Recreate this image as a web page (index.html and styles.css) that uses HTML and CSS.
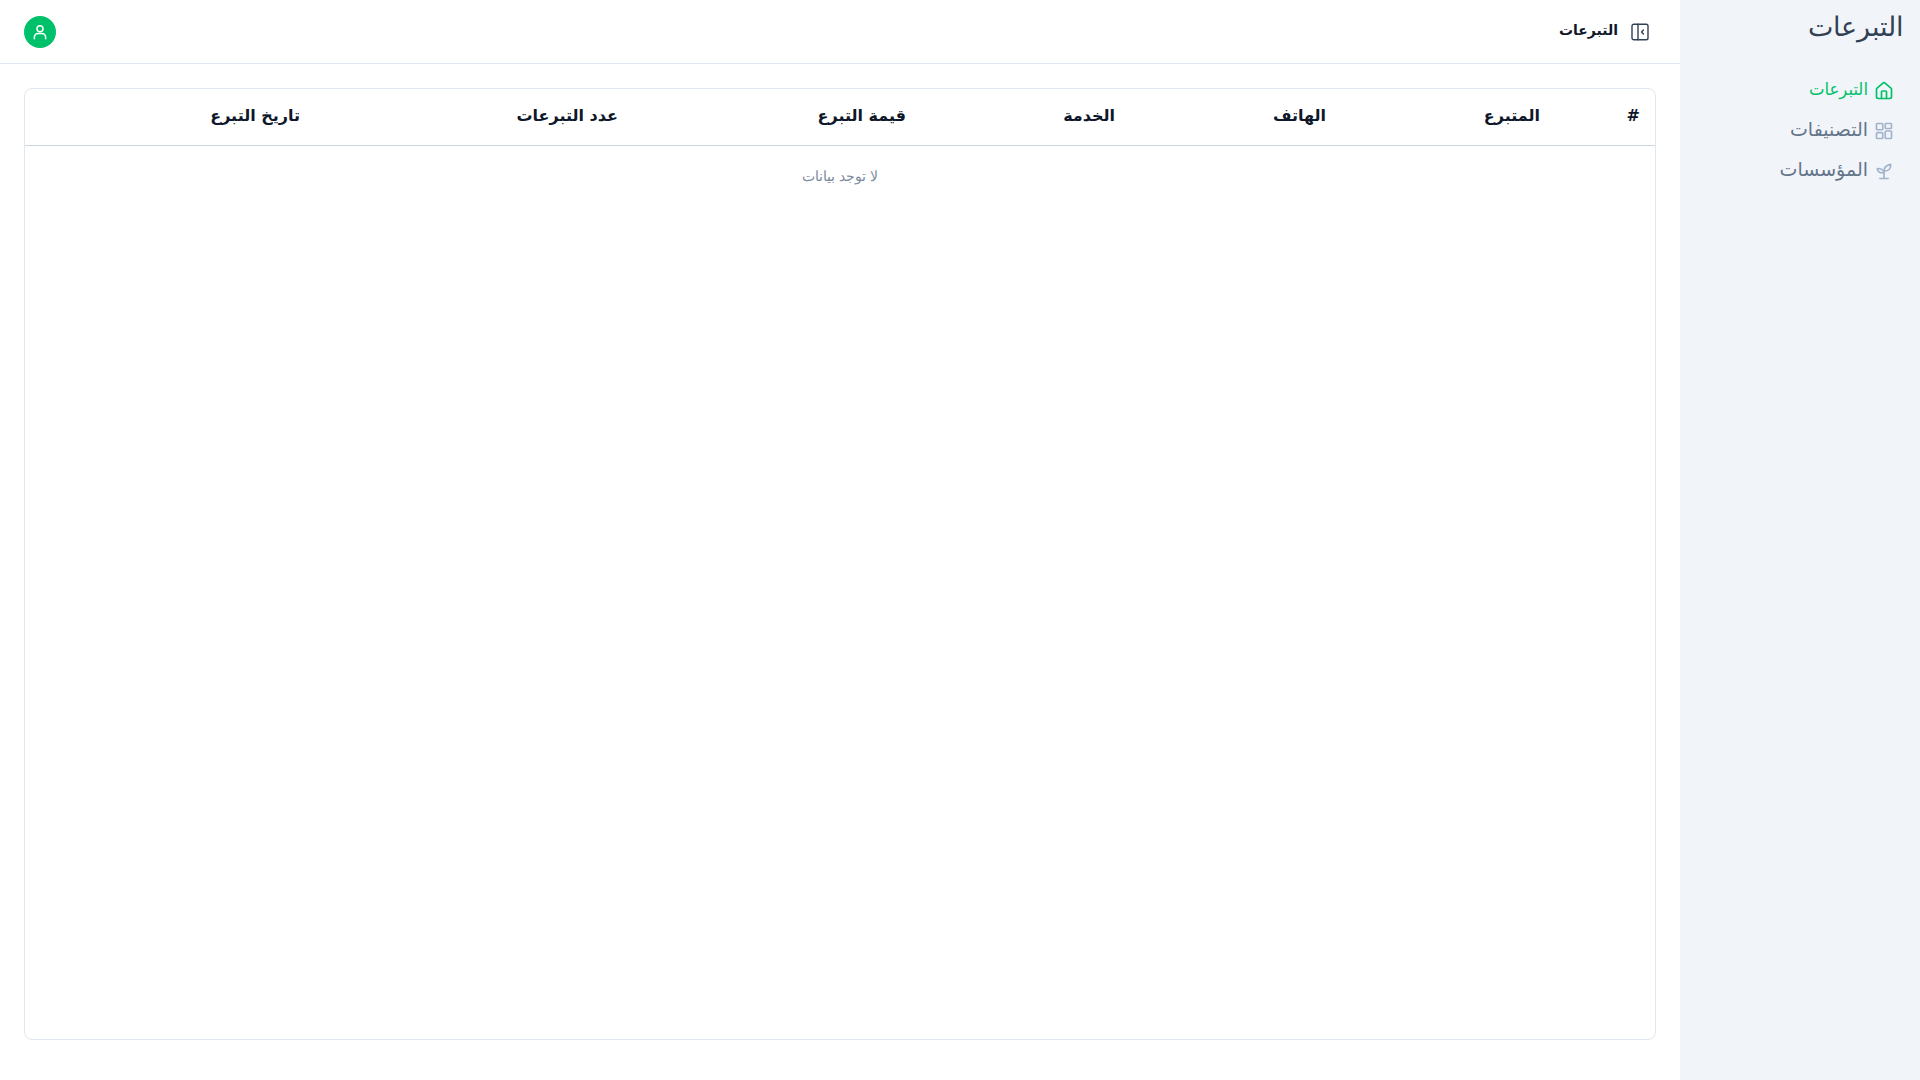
FILE: index.html
```html
<!DOCTYPE html>
<html lang="ar" dir="rtl">
<head>
<meta charset="utf-8">
<title>التبرعات</title>
<link rel="stylesheet" href="styles.css">
</head>
<body>
<div class="app">
  <aside class="sidebar">
    <div class="brand">التبرعات</div>
    <nav class="nav">
      <a class="nav-item active">
        <svg class="nav-icon" viewBox="0 0 24 24" fill="none" stroke="currentColor" stroke-width="2" stroke-linejoin="round" stroke-linecap="round"><path d="M15 21v-8a1 1 0 0 0-1-1h-4a1 1 0 0 0-1 1v8"/><path d="M3 10a2 2 0 0 1 .71-1.53l7-6a2 2 0 0 1 2.58 0l7 6A2 2 0 0 1 21 10v9a2 2 0 0 1-2 2H5a2 2 0 0 1-2-2z"/></svg>
        <span>التبرعات</span>
      </a>
      <a class="nav-item wide">
        <svg class="nav-icon muted" viewBox="0 0 24 24" fill="none" stroke="currentColor" stroke-width="2" stroke-linejoin="round"><rect x="3" y="3" width="7.500" height="7.500" rx="1"/><rect x="13.500" y="3" width="7.500" height="6" rx="1"/><rect x="13.500" y="12" width="7.500" height="9" rx="1"/><rect x="3" y="14" width="7.500" height="7" rx="1"/></svg>
        <span>التصنيفات</span>
      </a>
      <a class="nav-item wide">
        <svg class="nav-icon muted" viewBox="0 0 24 24" fill="none" stroke="currentColor" stroke-width="2" stroke-linejoin="round" stroke-linecap="round"><path d="M7 21h10"/><path d="M12 21v-9"/><path d="M12 12c0-3 1.500-7 8-8 .5 5-2 8-8 8z"/><path d="M12 14c-.5-3-3-5-8-5 0 4 3 5.500 8 5z"/></svg>
        <span>المؤسسات</span>
      </a>
    </nav>
  </aside>
  <main class="main">
    <header class="topbar">
      <div class="title-group">
        <svg class="panel-icon" viewBox="0 0 18 18" fill="none" stroke="currentColor" stroke-width="1.400" stroke-linecap="round" stroke-linejoin="round"><rect x="1" y="1.200" width="16" height="15.600" rx="1.800"/><path d="M7 1.200v15.600"/><path d="M12.400 7 10.600 9l1.800 2"/></svg>
        <span class="page-title">التبرعات</span>
      </div>
      <div class="avatar">
        <svg viewBox="0 0 24 24" fill="none" stroke="currentColor" stroke-width="2" stroke-linecap="round"><circle cx="12" cy="7.500" r="4"/><path d="M4.500 21v-2a5 5 0 0 1 5-5h5a5 5 0 0 1 5 5v2"/></svg>
      </div>
    </header>
    <section class="content">
      <div class="card">
        <table class="table">
          <colgroup>
            <col class="c1"><col class="c2"><col class="c3"><col class="c4"><col class="c5"><col class="c6"><col class="c7"><col>
          </colgroup>
          <thead>
            <tr>
              <th class="index">#</th>
              <th>المتبرع</th>
              <th>الهاتف</th>
              <th>الخدمة</th>
              <th>قيمة التبرع</th>
              <th>عدد التبرعات</th>
              <th>تاريخ التبرع</th>
              <th></th>
            </tr>
          </thead>
          <tbody>
            <tr><td class="empty" colspan="8">لا توجد بيانات</td></tr>
          </tbody>
        </table>
      </div>
    </section>
  </main>
</div>
</body>
</html>
```

FILE: styles.css
```css
* { box-sizing: border-box; }
html, body { margin: 0; height: 100%; }
body {
  font-family: "DejaVu Sans", "Noto Sans", sans-serif;
  background: #fff;
  color: #0f172a;
}
.app { display: flex; height: 1080px; overflow: hidden; }
.sidebar {
  width: 240px;
  flex: none;
  background: #f1f5f9;
  padding: 9px 16px 0;
}
.brand {
  font-size: 27px;
  line-height: 36px;
  font-weight: 300;
  color: #334155;
  height: 56px;
}
.nav { display: flex; flex-direction: column; gap: 8px; padding: 8px 10px 0 0; }
.nav-item {
  display: flex;
  align-items: center;
  gap: 6px;
  height: 32px;
  font-size: 16.500px;
  color: #64748b;
}
.nav-item.wide { font-size: 19px; }
.nav-item.active { color: #00c16a; }
.nav-icon { width: 20px; height: 20px; flex: none; position: relative; top: 2px; }
.nav-icon.muted { color: #a3b3cc; }
.main { flex: 1; display: flex; flex-direction: column; min-width: 0; }
.topbar {
  height: 64px;
  flex: none;
  display: flex;
  align-items: center;
  justify-content: space-between;
  padding: 0 24px;
  border-bottom: 1px solid #e2e8f0;
}
.title-group { display: flex; align-items: center; gap: 13px; padding-right: 7px; }
.panel-icon { width: 18px; height: 18px; color: #334155; }
.page-title { font-size: 14px; font-weight: 700; color: #0f172a; padding-bottom: 4px; }
.avatar {
  width: 32px;
  height: 32px;
  border-radius: 50%;
  background: #00c16a;
  color: #fff;
  display: flex;
  align-items: center;
  justify-content: center;
}
.avatar svg { width: 18px; height: 18px; }
.content { flex: 1; padding: 24px 24px 40px; min-height: 0; }
.card {
  height: 100%;
  border: 1px solid #e2e8f0;
  border-radius: 8px;
  overflow: hidden;
}
.table { width: 100%; border-collapse: collapse; table-layout: fixed; }
.c1 { width: 99px; }
.c2 { width: 214px; }
.c3 { width: 211px; }
.c4 { width: 209px; }
.c5 { width: 288px; }
.c6 { width: 318px; }
.c7 { width: 291px; }
.table th {
  height: 56px;
  padding: 0 16px 3px;
  text-align: right;
  font-size: 16px;
  font-weight: 700;
  color: #0f172a;
  border-bottom: 1px solid #cbd5e1;
}
.table th.index { padding-right: 15px; }
.empty {
  text-align: center;
  font-size: 14px;
  font-weight: 300;
  color: #7c8aa0;
  padding: 22px 16px 18px;
}
```
